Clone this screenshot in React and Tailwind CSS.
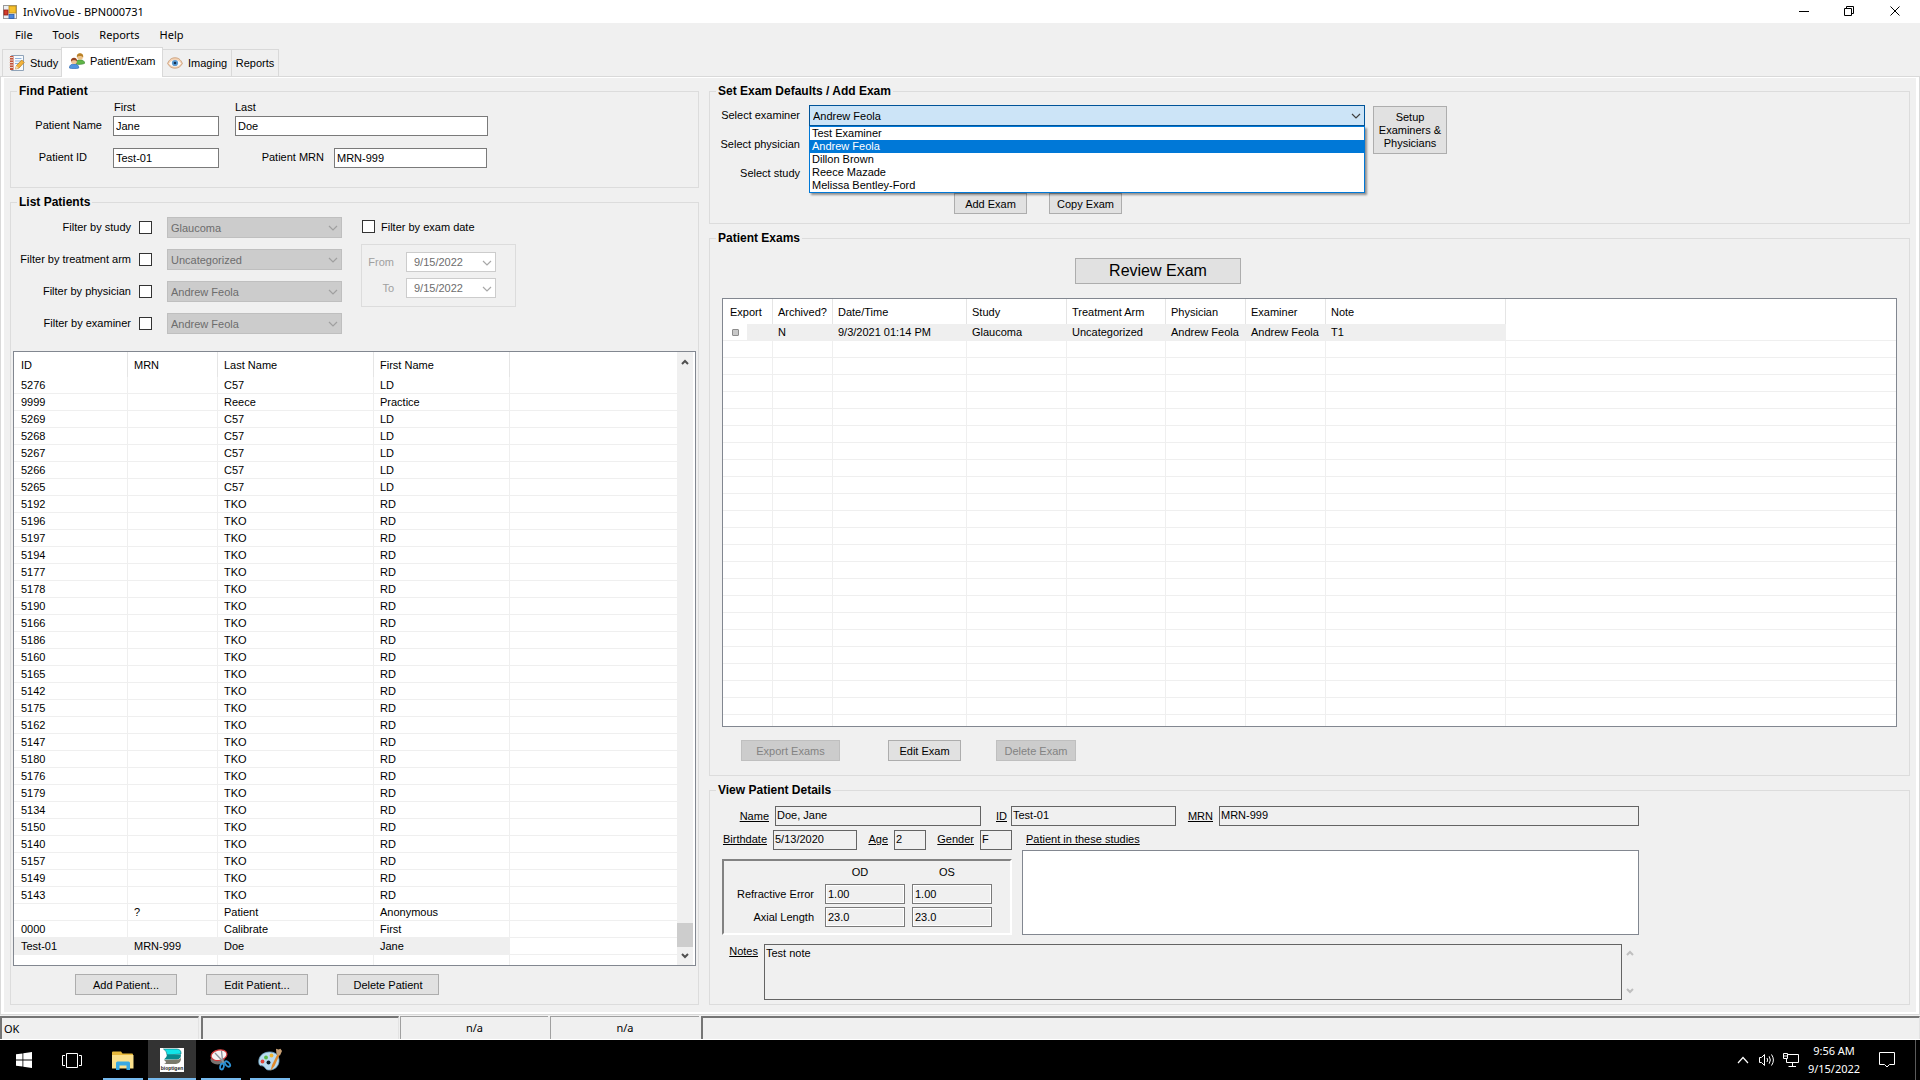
import { useState } from "react";

const patients = [
  ["5276", "", "C57", "LD"],
  ["9999", "", "Reece", "Practice"],
  ...["5269", "5268", "5267", "5266", "5265"].map((id) => [id, "", "C57", "LD"]),
  ...[
    "5192", "5196", "5197", "5194", "5177", "5178", "5190", "5166",
    "5186", "5160", "5165", "5142", "5175", "5162", "5147", "5180",
    "5176", "5179", "5134", "5150", "5140", "5157", "5149", "5143",
  ].map((id) => [id, "", "TKO", "RD"]),
  ["", "?", "Patient", "Anonymous"],
  ["0000", "", "Calibrate", "First"],
  ["Test-01", "MRN-999", "Doe", "Jane"],
];

const examHeaders = ["Export", "Archived?", "Date/Time", "Study", "Treatment Arm", "Physician", "Examiner", "Note"];
const exam = ["N", "9/3/2021 01:14 PM", "Glaucoma", "Uncategorized", "Andrew Feola", "Andrew Feola", "T1"];
const examiners = ["Test Examiner", "Andrew Feola", "Dillon Brown", "Reece Mazade", "Melissa Bentley-Ford"];

const filters = [
  { id: "study", label: "Filter by study", value: "Glaucoma" },
  { id: "arm", label: "Filter by treatment arm", value: "Uncategorized" },
  { id: "physician", label: "Filter by physician", value: "Andrew Feola" },
  { id: "examiner", label: "Filter by examiner", value: "Andrew Feola" },
];

function Chevron({ className, up }) {
  return (
    <svg viewBox="0 0 10 6" className={`w-[10px] h-[6px] ${className}`} fill="none" stroke="currentColor" strokeWidth="1.2">
      <path d={up ? "M1 5L5 1L9 5" : "M1 1L5 5L9 1"} />
    </svg>
  );
}

function ScrollArrow({ up, className }) {
  return (
    <svg viewBox="0 0 8 6" className={`w-2 h-[6px] ${className}`} fill="none" stroke="currentColor" strokeWidth="2">
      <path d={up ? "M1 5L4 2L7 5" : "M1 1L4 4L7 1"} />
    </svg>
  );
}

function Group({ title, className = "", children }) {
  return (
    <fieldset className={`min-w-0 border border-[#dcdcdc] ${className}`}>
      <legend className="ml-[6px] px-[2px] h-[14px] leading-[14px] text-[12px] font-bold">{title}</legend>
      {children}
    </fieldset>
  );
}

function Button({ className = "", children, ...rest }) {
  return (
    <button
      className={`h-[21px] border border-[#adadad] bg-[#e1e1e1] text-center disabled:border-[#bfbfbf] disabled:bg-[#cccccc] disabled:text-[#838383] ${className}`}
      {...rest}
    >
      {children}
    </button>
  );
}

function TextBox({ className = "", ...rest }) {
  return <input className={`h-5 border border-[#7a7a7a] bg-white px-[2px] ${className}`} {...rest} />;
}

// read-only box in the details pane
function Field({ className = "", ...rest }) {
  return <input readOnly className={`h-5 border border-[#646464] bg-[#f0f0f0] px-px pb-[2px] ${className}`} {...rest} />;
}

function DisabledSelect({ id, value }) {
  return (
    <div className="relative w-[175px]">
      <select id={id} disabled defaultValue={value} className="block w-full h-[21px] appearance-none border border-[#bfbfbf] bg-[#cccccc] pl-[3px] text-[#6d6d6d] opacity-100">
        <option>{value}</option>
      </select>
      <Chevron className="absolute right-1 top-2 text-[#a0a0a0]" />
    </div>
  );
}

function DatePick({ id }) {
  return (
    <div className="relative">
      <TextBox id={id} disabled defaultValue="9/15/2022" className="block w-[90px] border-[#cccccc] pl-[7px] text-[#6d6d6d]" />
      <Chevron className="absolute right-1 top-2 text-[#a8a8a8]" />
    </div>
  );
}

function Window() {
  return (
    <header className="bg-white">
      <div className="flex h-[23px] items-center">
        <svg viewBox="0 0 14 14" className="ml-[3px] w-[14px] h-[14px]">
          <rect x=".5" y=".5" width="13" height="13" fill="#eceff3" stroke="#9a9a9a" />
          <rect x="6" y="1" width="7" height="7" fill="#f5c02c" stroke="#b98a16" strokeWidth=".8" />
          <rect x="1" y="5" width="4" height="5" fill="#d23b2a" stroke="#8e1d14" strokeWidth=".8" />
          <rect x="6" y="9.500" width="5" height="4" fill="#4b86dc" stroke="#2d5da8" strokeWidth=".8" />
        </svg>
        <h1 className="ml-[6px] flex-1 font-['Noto_Sans',sans-serif] text-[11px]">InVivoVue - BPN000731</h1>
        <div className="flex pb-[2px] pr-[2px]">
          <button aria-label="Minimize" className="flex w-[45px] h-[21px] items-center justify-center">
            <svg viewBox="0 0 10 10" className="w-[10px] h-[10px]" stroke="#000"><path d="M0 5.500H10" /></svg>
          </button>
          <button aria-label="Restore" className="flex w-[46px] h-[21px] items-center justify-center">
            <svg viewBox="0 0 10 10" className="w-[10px] h-[10px]" fill="none" stroke="#000"><path d="M.5 2.500H7.500V9.500H.5ZM2.500 2.500V.5H9.500V7.500H7.500" /></svg>
          </button>
          <button aria-label="Close" className="flex w-[46px] h-[21px] items-center justify-center">
            <svg viewBox="0 0 10 10" className="w-[10px] h-[10px]" stroke="#000"><path d="M.5.5L9.500 9.500M9.500.5L.5 9.500" /></svg>
          </button>
        </div>
      </div>
      <nav className="flex h-6 items-center gap-5 bg-[#f0f0f0] pl-[15px] font-['Noto_Sans',sans-serif] text-[11px]">
        <button>File</button>
        <button>Tools</button>
        <button>Reports</button>
        <button>Help</button>
      </nav>
    </header>
  );
}

function StudyIcon() {
  return (
    <svg viewBox="0 0 16 16" className="w-4 h-4">
      <path d="M2.500.5H14.500V15.500H2.500Z" fill="#f7fafd" stroke="#8fa3b8" />
      <path d="M1 1H4.500V15H1Z" fill="#c2533a" />
      <path d="M0 2.500H4M0 5H4M0 7.500H4M0 10H4M0 12.500H4" stroke="#e9d3c8" />
      <path d="M6 3.500H12.500M6 6H12.500M6 8.500H10" stroke="#8fb4dc" />
      <path d="M6.500 14L7.500 10.500L12.800 5L15.200 7.400L10 13Z" fill="#f2b33c" stroke="#b17a1d" strokeWidth=".7" />
      <path d="M6.300 14.200L7.300 10.800L9.700 13.100Z" fill="#f4dcb4" />
    </svg>
  );
}

function PeopleIcon() {
  return (
    <svg viewBox="0 0 16 16" className="w-4 h-4">
      <path d="M6.500 11C6.500 8 8.500 6.800 11 6.800S15.700 8 15.700 10.300C14 11.500 9 11.800 6.500 11Z" fill="#5fb548" stroke="#35812a" strokeWidth=".6" />
      <circle cx="11" cy="3.800" r="3" fill="#eec38a" />
      <path d="M7.900 4.300C7.400 1.500 9.200.3 11 .3S14.700 1.500 14.200 4.500C13.500 2.600 9 2.300 7.900 4.300Z" fill="#b98228" />
      <path d="M.4 15C.4 12 2.300 11 5 11S9.800 12 9.800 15C8 16 2 16 .4 15Z" fill="#4f94e0" stroke="#2962ae" strokeWidth=".6" />
      <circle cx="5" cy="8.200" r="2.900" fill="#f0c498" />
      <path d="M2 8.800C1.500 6 3.200 4.700 5 4.700S8.500 6 8 8.800C7.200 7 3.200 6.800 2 8.800Z" fill="#93421f" />
    </svg>
  );
}

function EyeIcon() {
  return (
    <svg viewBox="0 0 16 12" className="w-4 h-3">
      <path d="M.6 6.500C2.500 2 5 .8 8 .8S13.500 2 15.400 6.500C13.500 10 11 11.200 8 11.200S2.500 10 .6 6.500Z" fill="#f3d3b6" stroke="#c79872" strokeWidth=".8" />
      <path d="M2 6.500C4 3.500 6 3 8 3S12 3.500 14 6.500C12 9 10 9.600 8 9.600S4 9 2 6.500Z" fill="#fbfcfe" />
      <circle cx="8" cy="6" r="3.100" fill="#5b9bd2" />
      <circle cx="8" cy="6" r="1.300" fill="#17304f" />
    </svg>
  );
}

function Tabs() {
  return (
    <div role="tablist" className="relative z-10 -mb-px flex h-[30px] items-start pl-[2px]">
      <button role="tab" className="mt-[2px] flex h-[27px] w-[59px] items-center gap-[5px] border-l border-t border-[#d9d9d9] pl-[6px]">
        <StudyIcon />Study
      </button>
      <button role="tab" aria-selected="true" className="flex h-[30px] w-[102px] items-center gap-[5px] border-x border-t border-[#d9d9d9] bg-white pb-1 pl-[7px]">
        <PeopleIcon />Patient/Exam
      </button>
      <button role="tab" className="mt-[2px] flex h-[27px] w-[69px] items-center gap-[5px] border-r border-t border-[#d9d9d9] pl-1">
        <EyeIcon />Imaging
      </button>
      <button role="tab" className="mt-[2px] flex h-[27px] w-[47px] items-center justify-center border-r border-t border-[#d9d9d9]">
        Reports
      </button>
    </div>
  );
}

function FindPatient() {
  return (
    <Group title="Find Patient" className="pb-[19px]">
      <div className="flex h-[18px] items-center pl-[103px]">
        <label htmlFor="first" className="w-[121px]">First</label>
        <label htmlFor="last">Last</label>
      </div>
      <div className="flex items-center">
        <label htmlFor="first" className="w-[102px] pb-[2px] pr-[11px] text-right">Patient Name</label>
        <TextBox id="first" defaultValue="Jane" className="w-[106px]" />
        <TextBox id="last" defaultValue="Doe" className="ml-4 w-[253px]" />
      </div>
      <div className="mt-3 flex items-center">
        <label htmlFor="pid" className="w-[102px] pb-[2px] pr-[26px] text-right">Patient ID</label>
        <TextBox id="pid" defaultValue="Test-01" className="w-[106px]" />
        <label htmlFor="mrn" className="w-[115px] pb-[2px] pr-[10px] text-right">Patient MRN</label>
        <TextBox id="mrn" defaultValue="MRN-999" className="w-[153px]" />
      </div>
    </Group>
  );
}

function PatientTable() {
  const cell = "border-b border-r border-[#efefef] pl-[5px]";
  return (
    <div className="mx-[2px] mt-[17px] flex border border-[#828790] bg-white">
      <table className="w-full flex-1 table-fixed border-separate border-spacing-0 text-left">
        <colgroup>
          <col className="w-[114px]" />
          <col className="w-[90px]" />
          <col className="w-[156px]" />
          <col className="w-[136px]" />
          <col />
        </colgroup>
        <thead>
          <tr className="h-[25px]">
            {["ID", "MRN", "Last Name", "First Name", ""].map((h, i) => (
              <th key={i} className={`font-normal ${i === 0 ? "pl-[7px]" : "pl-[6px]"} ${i < 4 ? "border-r border-[#e5e5e5]" : ""}`}>{h}</th>
            ))}
          </tr>
        </thead>
        <tbody>
          {patients.map((row, r) => {
            const picked = r === patients.length - 1;
            return (
              <tr key={r} className="h-[17px] leading-4">
                {row.map((value, i) => (
                  <td key={i} className={`${cell} ${i === 0 ? "pl-[7px]" : "pl-[6px]"} ${picked ? "bg-[#efefef]" : ""}`}>{value}</td>
                ))}
                <td className="border-b border-[#efefef]" />
              </tr>
            );
          })}
          <tr className="h-[10px]">
            {[0, 1, 2, 3].map((i) => <td key={i} className="border-r border-[#efefef]" />)}
            <td />
          </tr>
        </tbody>
      </table>
      <div className="mr-[2px] flex w-4 flex-col items-center bg-[#f0f0f0] pb-[6px] pt-[7px]">
        <ScrollArrow up className="text-[#505050]" />
        <div className="flex-1" />
        <div className="h-6 w-4 bg-[#cdcdcd]" />
        <ScrollArrow className="mt-[6px] text-[#505050]" />
      </div>
    </div>
  );
}

function ListPatients() {
  return (
    <Group title="List Patients" className="mt-[7px] flex-1 pb-[9px]">
      <div className="flex pt-2">
        <div className="flex flex-col gap-[11px]">
          {filters.map((f) => (
            <div key={f.id} className="flex items-center">
              <label htmlFor={`by-${f.id}`} className="w-[120px] pb-px text-right">{f.label}</label>
              <input type="checkbox" id={`by-${f.id}`} className="ml-2 mr-[15px] size-[13px] appearance-none border border-[#333333] bg-white" />
              <DisabledSelect value={f.value} />
            </div>
          ))}
        </div>
        <div className="ml-[19px]">
          <div className="flex h-[19px] items-center">
            <input type="checkbox" id="by-date" className="ml-px mr-[6px] size-[13px] appearance-none border border-[#333333] bg-white" />
            <label htmlFor="by-date">Filter by exam date</label>
          </div>
          <div className="mt-2 flex w-[155px] flex-col gap-[6px] border border-[#dcdcdc] pb-2 pt-[7px] text-[#a0a0a0]">
            <div className="flex items-center">
              <label htmlFor="from" className="mr-3 w-8 text-right">From</label>
              <DatePick id="from" />
            </div>
            <div className="flex items-center">
              <label htmlFor="to" className="mr-3 w-8 text-right">To</label>
              <DatePick id="to" />
            </div>
          </div>
        </div>
      </div>
      <PatientTable />
      <div className="mt-2 flex gap-[29px] pl-16">
        <Button className="w-[102px]">Add Patient...</Button>
        <Button className="w-[102px]">Edit Patient...</Button>
        <Button className="w-[102px]">Delete Patient</Button>
      </div>
    </Group>
  );
}

function ExamDefaults() {
  const [examiner, setExaminer] = useState("Andrew Feola");
  return (
    <Group title="Set Exam Defaults / Add Exam" className="pb-[9px]">
      <div className="flex items-start pt-[7px]">
        <div className="flex flex-col gap-2">
          <div className="flex items-center">
            <label htmlFor="examiner" className="w-[99px] pb-[2px] pr-[9px] text-right">Select examiner</label>
            <div className="relative w-[556px]">
              <select
                id="examiner"
                value={examiner}
                onChange={(e) => setExaminer(e.target.value)}
                className="block h-[21px] w-full appearance-none border border-[#005499] bg-[#cce4f7] pl-[3px]"
              >
                {examiners.map((name) => <option key={name}>{name}</option>)}
              </select>
              <Chevron className="absolute right-1 top-2 text-[#404040]" />
              <ul className="absolute left-0 top-full z-20 w-full border border-[#0078d7] bg-white leading-[13px] shadow-[2px_2px_2px_rgba(0,0,0,0.4)]">
                {examiners.map((name) => (
                  <li
                    key={name}
                    onClick={() => setExaminer(name)}
                    className={`pl-[2px] ${name === examiner ? "bg-[#0078d7] text-white" : ""}`}
                  >
                    {name}
                  </li>
                ))}
              </ul>
            </div>
          </div>
          <div className="flex items-center">
            <label htmlFor="def-physician" className="w-[99px] pb-[2px] pr-[9px] text-right">Select physician</label>
            <select id="def-physician" className="h-[21px] w-[552px] appearance-none border border-[#adadad] bg-[#e1e1e1]" />
          </div>
          <div className="flex items-center">
            <label htmlFor="def-study" className="w-[99px] pb-[2px] pr-[9px] text-right">Select study</label>
            <select id="def-study" className="h-[21px] w-[552px] appearance-none border border-[#adadad] bg-[#e1e1e1]" />
          </div>
        </div>
        <button className="ml-2 mt-px w-[74px] border border-[#adadad] bg-[#e1e1e1] py-[3px] text-center leading-[13px] h-12">
          Setup Examiners &amp; Physicians
        </button>
      </div>
      <div className="mt-[9px] flex gap-[22px] pl-[244px]">
        <Button className="w-[73px]">Add Exam</Button>
        <Button className="w-[73px]">Copy Exam</Button>
      </div>
    </Group>
  );
}

function PatientExams() {
  const line = "border-b border-r border-[#efefef]";
  return (
    <Group title="Patient Exams" className="mt-[7px] pb-[14px]">
      <button className="ml-[365px] mt-[13px] block h-[26px] w-[166px] border border-[#adadad] bg-[#e1e1e1] text-[16px] leading-6">
        Review Exam
      </button>
      <div className="mx-3 mt-[14px] border border-[#828790] bg-white">
        <table className="w-full table-fixed border-separate border-spacing-0 whitespace-nowrap text-left">
          <colgroup>
            <col className="w-[50px]" />
            <col className="w-[60px]" />
            <col className="w-[134px]" />
            <col className="w-[100px]" />
            <col className="w-[99px]" />
            <col className="w-[80px]" />
            <col className="w-[80px]" />
            <col className="w-[180px]" />
            <col />
          </colgroup>
          <thead>
            <tr className="h-[25px]">
              {examHeaders.map((h, i) => (
                <th key={h} className={`border-r border-[#e5e5e5] font-normal ${i === 0 ? "pl-[7px]" : "pl-[5px]"}`}>{h}</th>
              ))}
              <th />
            </tr>
          </thead>
          <tbody>
            <tr className="h-[17px] leading-4">
              <td className={`${line} bg-linear-to-r from-white from-48% to-[#efefef] to-48%`}>
                <input type="checkbox" aria-label="Export exam" className="ml-[9px] block size-[7px] appearance-none rounded-[1px] border border-[#8c8c8c] bg-[#c8c8c8]" />
              </td>
              {exam.map((value, i) => (
                <td key={i} className={`${line} bg-[#efefef] pl-[5px]`}>{value}</td>
              ))}
              <td className="border-b border-[#efefef]" />
            </tr>
            {Array.from({ length: 22 }, (_, r) => (
              <tr key={r} className="h-[17px]">
                {examHeaders.map((h) => <td key={h} className={line} />)}
                <td className="border-b border-[#efefef]" />
              </tr>
            ))}
            <tr className="h-[11px]">
              {examHeaders.map((h) => <td key={h} className="border-r border-[#efefef]" />)}
              <td />
            </tr>
          </tbody>
        </table>
      </div>
      <div className="mt-[13px] flex pl-[31px]">
        <Button disabled className="w-[99px]">Export Exams</Button>
        <Button className="ml-12 w-[73px]">Edit Exam</Button>
        <Button disabled className="ml-[35px] w-20">Delete Exam</Button>
      </div>
    </Group>
  );
}

function EyeValue(props) {
  return <input readOnly className="h-5 w-20 border border-[#7a7a7a] bg-[#f0f0f0] px-[2px] shadow-[inset_0_0_0_1px_#ffffff]" {...props} />;
}

function PatientDetails() {
  return (
    <Group title="View Patient Details" className="mt-[7px] pb-1">
      <div className="flex items-center pt-[9px]">
        <label htmlFor="d-name" className="w-[65px] pb-px pr-[6px] text-right underline">Name</label>
        <Field id="d-name" value="Doe, Jane" className="w-[206px]" />
        <label htmlFor="d-id" className="w-[30px] pb-px pr-1 text-right underline">ID</label>
        <Field id="d-id" value="Test-01" className="w-[165px]" />
        <label htmlFor="d-mrn" className="w-[43px] pb-px pr-[6px] text-right underline">MRN</label>
        <Field id="d-mrn" value="MRN-999" className="w-[420px]" />
      </div>
      <div className="mt-1 flex">
        <div>
          <div className="flex items-center">
            <label htmlFor="d-birth" className="w-[63px] pb-[2px] pr-[6px] text-right underline">Birthdate</label>
            <Field id="d-birth" value="5/13/2020" className="w-[84px]" />
            <label htmlFor="d-age" className="w-[37px] pb-[2px] pr-[6px] text-right underline">Age</label>
            <Field id="d-age" value="2" className="w-8" />
            <label htmlFor="d-gender" className="w-[54px] pb-[2px] pr-[6px] text-right underline">Gender</label>
            <Field id="d-gender" value="F" className="w-8" />
          </div>
          <div className="ml-3 mt-[9px] h-[76px] w-[290px] border-2 border-b-white border-l-[#828282] border-r-white border-t-[#828282]">
            <div className="flex h-[23px] items-center pb-[2px] pl-[101px] text-center">
              <span className="mr-[7px] w-20 pr-[10px]">OD</span>
              <span className="w-20 pr-[10px]">OS</span>
            </div>
            <div className="flex items-center gap-[7px]">
              <label htmlFor="re-od" className="mr-1 w-[90px] text-right">Refractive Error</label>
              <EyeValue id="re-od" value="1.00" />
              <EyeValue aria-label="Refractive Error OS" value="1.00" />
            </div>
            <div className="mt-[3px] flex items-center gap-[7px]">
              <label htmlFor="al-od" className="mr-1 w-[90px] text-right">Axial Length</label>
              <EyeValue id="al-od" value="23.0" />
              <EyeValue aria-label="Axial Length OS" value="23.0" />
            </div>
          </div>
        </div>
        <div className="ml-[10px] w-[617px]">
          <div className="h-5 pl-1 leading-[18px] underline">Patient in these studies</div>
          <div className="h-[85px] border border-[#828790] bg-white" />
        </div>
      </div>
      <div className="mt-[9px] flex">
        <label htmlFor="notes" className="w-[54px] pr-[6px] text-right underline">Notes</label>
        <textarea id="notes" readOnly value="Test note" className="h-14 w-[858px] resize-none border border-[#646464] bg-[#f0f0f0] px-px pt-px" />
        <div className="flex w-4 flex-col items-center justify-between py-[6px] text-[#bfbfbf]">
          <ScrollArrow up />
          <ScrollArrow />
        </div>
      </div>
    </Group>
  );
}

function StatusBar() {
  const sunken = "border-l-2 border-t-2 border-l-[#757575] border-t-[#757575] border-r border-r-[#e3e3e3]";
  const flat = "border-l border-t border-[#a0a0a0]";
  return (
    <footer className="mt-px flex h-6 gap-[2px] border-b border-white bg-[#f0f0f0] font-['Noto_Sans',sans-serif] leading-[21px]">
      <div className={`w-[199px] pl-[2px] ${sunken}`}>OK</div>
      <div className={`w-[198px] ${sunken}`} />
      <div className={`-ml-px w-[148px] text-center ${flat}`}>n/a</div>
      <div className={`w-[149px] text-center ${flat}`}>n/a</div>
      <div className={`flex-1 ${sunken}`} />
    </footer>
  );
}

function Taskbar() {
  return (
    <div className="flex h-10 items-stretch bg-black text-white">
      <button aria-label="Start" className="flex w-12 items-center justify-center">
        <svg viewBox="0 0 16 16" className="w-4 h-4" fill="#fff">
          <path d="M0 2.300L6.500 1.400V7.600H0ZM7.300 1.300L16 0V7.600H7.300ZM0 8.400H6.500V14.600L0 13.700ZM7.300 8.400H16V16L7.300 14.700Z" />
        </svg>
      </button>
      <button aria-label="Task View" className="flex w-12 items-center justify-center">
        <svg viewBox="0 0 20 15" className="w-5 h-[15px]" fill="none" stroke="#fff">
          <path d="M4.500.5H15.500V14.500H4.500ZM3 2.500H.5V12.500H3M17 2.500H19.500V12.500H17" />
        </svg>
      </button>
      <button aria-label="File Explorer" className="ml-[7px] flex w-10 items-center justify-center border-b-2 border-[#76b9ed] pt-[2px]">
        <svg viewBox="0 0 22 19" className="w-[22px] h-[19px]">
          <path d="M0 1.500Q0 .5 1 .5H9L10.500 2.500H20Q21 2.500 21 3.500V17H0Z" fill="#e8b93c" />
          <path d="M0 4H21.500V17.500H0Z" fill="#fbe08c" />
          <path d="M4 19V12Q4 10.500 5.500 10.500H16.500Q18 10.500 18 12V19H14.500V14.500H7.500V19Z" fill="#37a9e4" />
        </svg>
      </button>
      <button aria-label="InVivoVue" className="ml-[5px] flex w-12 items-center justify-center border-b-2 border-[#76b9ed] bg-[#333333] pt-[2px]">
        <svg viewBox="0 0 24 24" className="w-6 h-6">
          <rect width="24" height="24" fill="#fff" />
          <path d="M3.500 1H17Q21.500 1.500 21 6L7 7Q7 3 3.500 1Z" fill="#12e4e8" stroke="#0c6b6e" strokeWidth=".6" />
          <path d="M7 6.500H21Q21 11 17 11.500H4Q7 9.500 7 6.500Z" fill="#08898d" />
          <path d="M4 12L18 11.500Q21 11 21 8.500Q21.500 15.500 16 16H4Q8 14.500 4 12Z" fill="#7a7a6c" />
          <text x="12" y="22" textAnchor="middle" fontSize="5" fontFamily="Liberation Sans" fontWeight="bold" fill="#222">bioptigen</text>
        </svg>
      </button>
      <button aria-label="Snipping Tool" className="ml-[5px] flex w-10 items-center justify-center border-b-2 border-[#76b9ed] pt-[2px]">
        <svg viewBox="0 0 22 22" className="w-[22px] h-[22px]" fill="none">
          <ellipse cx="7.500" cy="10.500" rx="7" ry="5" fill="#77726f" />
          <ellipse cx="9" cy="6.200" rx="8" ry="5.200" transform="rotate(-12 9 6.200)" fill="#f6f3f3" stroke="#d33a3a" strokeWidth="1.200" />
          <path d="M5 4L14.500 14M11.500 2L12.800 14" stroke="#8b9299" strokeWidth="1.300" />
          <ellipse cx="12" cy="17.500" rx="1.800" ry="3" transform="rotate(15 12 17.500)" stroke="#2f93d6" strokeWidth="1.800" />
          <ellipse cx="17.500" cy="15" rx="1.800" ry="3.200" transform="rotate(-45 17.500 15)" stroke="#2f93d6" strokeWidth="1.800" />
        </svg>
      </button>
      <button aria-label="Paint" className="ml-[9px] flex w-10 items-center justify-center border-b-2 border-[#76b9ed] pt-[2px]">
        <svg viewBox="0 0 24 24" className="w-6 h-6">
          <path d="M11 4C4 4.500.5 9 .8 14C1 18.500 3 17.500 5 18C7.500 19 7 22.500 12 22C18 21.500 21.500 17 21 11.500C20.500 6.500 16.500 3.600 11 4Z" fill="#b9dcf0" stroke="#6d9fbe" strokeWidth=".8" />
          <circle cx="10.500" cy="14.500" r="2" fill="#0b1a24" />
          <circle cx="4.500" cy="13.500" r="1.900" fill="#e0453a" />
          <circle cx="8" cy="9.500" r="1.900" fill="#57b947" />
          <circle cx="13.500" cy="7.500" r="1.900" fill="#f2b632" />
          <path d="M12.500 23L14 17L19.500 6L21.500 7L16.500 18Z" fill="#e08a2c" />
          <path d="M18.500 6.500L18 .8L20.500 1.500L22.500.8L24 3L22 7.500Z" fill="#c9a074" />
        </svg>
      </button>
      <div className="flex-1" />
      <div className="flex items-center">
        <button aria-label="Hidden icons">
          <svg viewBox="0 0 12 8" className="w-3 h-2" fill="none" stroke="#fff" strokeWidth="1.200"><path d="M1 7L6 1.500L11 7" /></svg>
        </button>
        <button aria-label="Volume" className="ml-[10px]">
          <svg viewBox="0 0 16 14" className="w-4 h-[14px]" fill="none" stroke="#fff">
            <path d="M.5 4.500H2.500L5.500 1.500V12.500L2.500 9.500H.5Z" />
            <path d="M8 5Q9.200 7 8 9M10.200 3.300Q12.500 7 10.200 10.700M12.500 1.500Q16.300 7 12.500 12.500" />
          </svg>
        </button>
        <button aria-label="Network" className="ml-2">
          <svg viewBox="0 0 16 14" className="w-4 h-[14px]" fill="none" stroke="#fff">
            <path d="M5 1.500H15.500V9.500H3.500V6M.5.5H4.500V5.500H.5ZM.5 3H4.500M9.500 9.500V13M5.500 13.500H13" />
          </svg>
        </button>
        <div className="ml-[7px] w-[56px] pb-px text-center font-['Noto_Sans',sans-serif] leading-[18px]">
          <div>9:56 AM</div>
          <div>9/15/2022</div>
        </div>
        <button aria-label="Notifications" className="ml-[17px]">
          <svg viewBox="0 0 16 16" className="w-4 h-4" fill="none" stroke="#fff"><path d="M.5.5H15.500V12.500H10.500L8 15L5.500 12.500H.5Z" /></svg>
        </button>
        <div className="ml-5 mr-1 h-10 w-px bg-[#5a5a5a]" />
      </div>
    </div>
  );
}

export default function App() {
  return (
    <div className="flex min-h-screen flex-col bg-[#f0f0f0] font-['Liberation_Sans',Arial,sans-serif] text-[11px] leading-[14px] text-black">
      <Window />
      <Tabs />
      <main className="flex-1 border border-[#d9d9d9] bg-white px-[3px] pb-[2px] pt-px">
        <div className="grid grid-cols-[689fr_1201fr] gap-[10px] bg-[#f0f0f0] px-[6px] pb-[7px] pt-[6px]">
          <div className="flex min-w-0 flex-col">
            <FindPatient />
            <ListPatients />
          </div>
          <div className="min-w-0">
            <ExamDefaults />
            <PatientExams />
            <PatientDetails />
          </div>
        </div>
      </main>
      <StatusBar />
      <Taskbar />
    </div>
  );
}
